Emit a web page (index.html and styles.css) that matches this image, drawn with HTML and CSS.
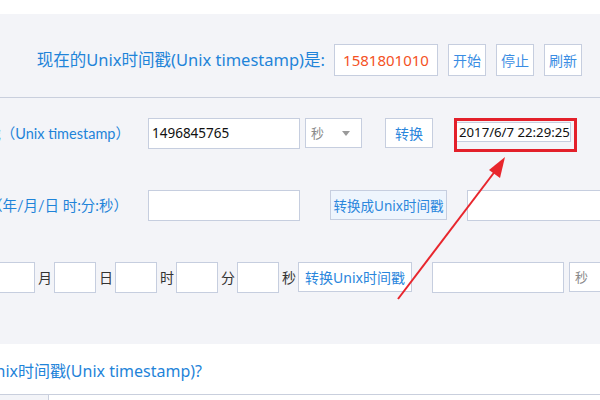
FILE: index.html
```html
<!DOCTYPE html>
<html lang="zh-CN">
<head>
<meta charset="utf-8">
<title>Unix时间戳</title>
<link rel="stylesheet" href="styles.css">
</head>
<body>
<div class="topbar"></div>
<section class="panel">
  <div class="now">
    <span class="now-label">现在的Unix时间戳(Unix timestamp)是:</span>
    <span class="stamp">1581801010</span>
    <button class="btn">开始</button>
    <button class="btn">停止</button>
    <button class="btn">刷新</button>
  </div>
  <div class="convert">
    <div class="row">
      <span class="row-label">Unix时间戳（Unix timestamp）</span>
      <span class="field w152">1496845765</span>
      <span class="select">秒<i class="caret"></i></span>
      <button class="act act-a">转换</button>
      <span class="result">
        <span class="field wide">2017/6/7 22:29:25</span>
        <span class="mark"></span>
      </span>
    </div>
    <div class="row">
      <span class="row-label">北京时间（年/月/日 时:分:秒）</span>
      <span class="field w152"></span>
      <button class="act act-b">转换成Unix时间戳</button>
      <span class="field wide gap20"></span>
    </div>
    <div class="row row-parts">
      <span class="field w60"></span><span class="unit">年</span>
      <span class="field w42"></span><span class="unit">月</span>
      <span class="field w42"></span><span class="unit">日</span>
      <span class="field w42"></span><span class="unit">时</span>
      <span class="field w42"></span><span class="unit">分</span>
      <span class="field w42"></span><span class="unit">秒</span>
      <button class="act act-c">转换Unix时间戳</button>
      <span class="field w132"></span>
      <span class="select sel-b">秒</span>
    </div>
    <svg class="arrow" width="600" height="400" viewBox="0 0 600 400" aria-hidden="true">
      <line x1="398" y1="299" x2="496" y2="170" stroke="#e8262d" stroke-width="2"/>
      <polygon points="505,157 500,178 489,170" fill="#e8262d"/>
    </svg>
  </div>
</section>
<section class="faq">
  <h2 class="faq-title">如何在不同编程语言中获取现在的Unix时间戳(Unix timestamp)?</h2>
  <div class="table">
    <div class="cell-head"></div>
    <div class="cell-body"></div>
  </div>
</section>
</body>
</html>
```
FILE: styles.css
```css
html, body {
  margin: 0;
  padding: 0;
  background: #ffffff;
  overflow: hidden;
}
body {
  width: 600px;
  height: 400px;
  font-family: "Noto Sans", "Noto Sans CJK SC", sans-serif;
  font-size: 14px;
  color: #222;
}
.topbar {
  height: 14px;
  background: #ffffff;
}
.panel {
  background: #f3f4f8;
  position: relative;
}
.now {
  height: 84px;
  box-sizing: border-box;
  padding: 30px 0 0 5px;
  border-bottom: 1px solid #c9cfdd;
  display: flex;
  align-items: flex-start;
}
.now-label {
  width: 320px;
  margin-right: 9px;
  text-align: right;
  color: #1f84d9;
  font-size: 16.5px;
  line-height: 32px;
  white-space: nowrap;
  flex: none;
}
.stamp {
  width: 104px;
  height: 32px;
  box-sizing: border-box;
  border: 1px solid #c6cedf;
  background: #fff;
  color: #f4521f;
  font-size: 15px;
  line-height: 30px;
  text-align: center;
  flex: none;
}
.btn {
  width: 38px;
  height: 32px;
  margin-left: 10px;
  padding: 0;
  box-sizing: border-box;
  border: 1px solid #c6cedf;
  background: #fff;
  color: #3a8de3;
  font-family: inherit;
  font-size: 14px;
  flex: none;
}
.convert {
  padding: 20px 0 51px 0;
  display: flex;
  flex-direction: column;
  gap: 41px;
}
.row {
  display: flex;
  align-items: flex-start;
  height: 31px;
  margin-left: -72px;
}
.row-label {
  width: 200px;
  margin-right: 20px;
  text-align: right;
  color: #1f84d9;
  font-family: "Lato", "Noto Sans CJK SC", sans-serif;
  font-size: 14.5px;
  line-height: 31px;
  white-space: nowrap;
  flex: none;
}
.field {
  height: 31px;
  box-sizing: border-box;
  border: 1px solid #c6cedf;
  background: #fff;
  font-size: 13.5px;
  line-height: 29px;
  padding-left: 3px;
  color: #111;
  flex: none;
  white-space: nowrap;
}
.w152 { width: 152px; }
.w132 { width: 132px; margin-left: 20px; }
.w60 { width: 60px; }
.w42 { width: 42px; }
.wide { width: 200px; }
.gap20 { margin-left: 20px; }
.select {
  width: 57px;
  height: 30px;
  margin-left: 5px;
  box-sizing: border-box;
  border: 1px solid #c6cedf;
  background: #fff;
  color: #8a8a8a;
  font-size: 13px;
  line-height: 28px;
  padding-left: 5px;
  display: flex;
  align-items: center;
  flex: none;
}
.caret {
  width: 0;
  height: 0;
  margin-left: 18px;
  border-left: 4px solid transparent;
  border-right: 4px solid transparent;
  border-top: 5px solid #9a9a9a;
}
.act {
  height: 30px;
  box-sizing: border-box;
  border: 1px solid #c6cedf;
  background: #fff;
  color: #2a86dc;
  font-family: inherit;
  font-size: 14px;
  padding: 0;
  flex: none;
  white-space: nowrap;
}
.act-a { width: 48px; margin-left: 23px; }
.act-b { width: 117px; margin-left: 30px; background: #eef5fd; font-size: 13.5px; }
.act-c { width: 114px; margin-left: 0; }
.result {
  position: relative;
  margin-left: 21px;
  flex: none;
}
.result .field {
  padding-left: 4px;
  font-size: 13.2px;
}
.mark {
  position: absolute;
  left: 0;
  top: 0;
  width: 123px;
  height: 34px;
  box-sizing: border-box;
  border: 3px solid #e3202a;
}
.row-parts {
  margin-left: -86px;
}
.unit {
  width: 14px;
  margin: 0 2px 0 3px;
  line-height: 31px;
  font-size: 14px;
  color: #333;
  flex: none;
}
.sel-b {
  height: 30px;
  width: 60px;
}
.arrow {
  position: absolute;
  left: 0;
  top: -14px;
  pointer-events: none;
}
.faq {
  background: #fff;
  padding-top: 1px;
}
.faq-title {
  margin: 13px 0 0 -300px;
  width: 502px;
  text-align: right;
  font-size: 16px;
  font-weight: normal;
  color: #1f84d9;
  line-height: 26px;
  white-space: nowrap;
}
.table {
  margin-top: 10px;
  border-top: 1px solid #c9cfdd;
  display: flex;
  height: 40px;
}
.cell-head {
  width: 48px;
  background: #f3f4f8;
  border-right: 1px solid #c9cfdd;
}
.cell-body {
  flex: 1;
}
```
